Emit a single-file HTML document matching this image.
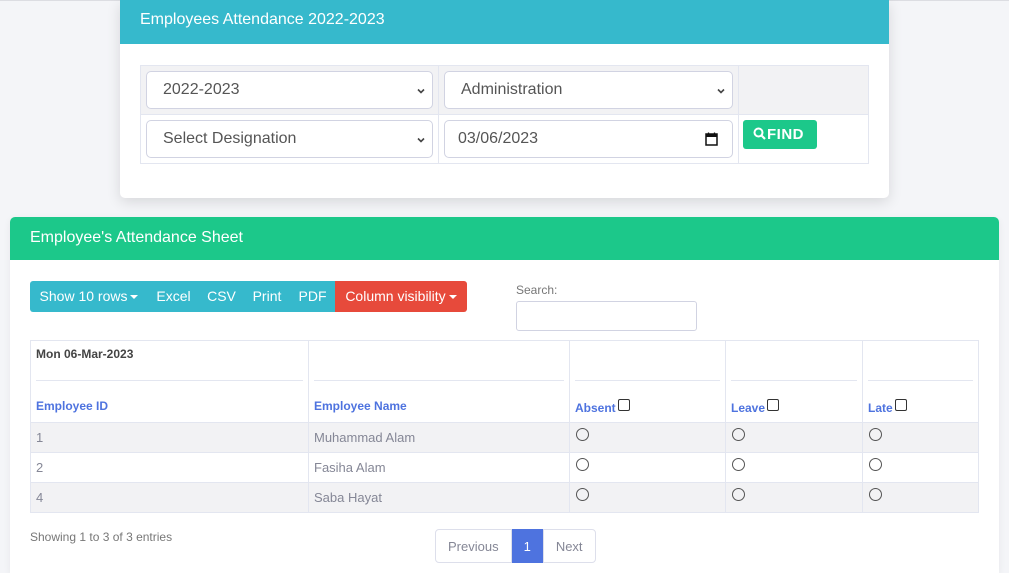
<!DOCTYPE html>
<html><head><style>
*{box-sizing:border-box;margin:0;padding:0}
html,body{width:1009px;height:573px;overflow:hidden}
body{background:#f4f5f8;font-family:"Liberation Sans",sans-serif;position:relative}
.topline{position:absolute;left:0;top:0;width:1009px;height:1px;background:#dcdde2}
.card1{position:absolute;left:120px;top:0;width:769px;height:198px;background:#fff;box-shadow:0 4px 14px rgba(0,0,0,.12);border-radius:0 0 5px 5px}
.h1{height:44px;background:#36b9cc;color:#fff;font-size:16px;padding:11px 20px}
.t1{position:absolute;left:20px;top:65px;width:729px;border-collapse:collapse}
.t1 td{border:1px solid #e3e6f0;padding:0 5px;height:49px}
.t1 tr:first-child td{background:#f2f2f4}
.sel{height:38px;border:1px solid #d1d3e2;border-radius:5px;background:#fff;color:#555;font-size:16px;padding:9px 16px;position:relative}
.sel .ch{position:absolute;right:6px;top:14px;width:10px;height:10px}
.find{display:inline-block;background:#1cc88a;color:#fff;font-weight:bold;font-size:15px;padding:6px 10px 6px 10px;width:74px;border-radius:3px;margin-left:-1px;letter-spacing:0.5px}
.card2{position:absolute;left:10px;top:217px;width:989px;height:356px;background:#fff;border-radius:5px 5px 0 0;box-shadow:0 2px 8px rgba(0,0,0,.06)}
.h2{height:43px;background:#1cc88a;color:#fff;font-size:16px;padding:12px 20px;border-radius:5px 5px 0 0}
.btns{position:absolute;left:20px;top:64px;height:31px;display:flex;font-size:14px;color:#fff}
.btns div{padding:7px 0;background:#36b9cc;text-align:center}
.btns .r{background:#e74a3b;border-radius:0 3px 3px 0}
.btns .f{border-radius:3px 0 0 3px}
.car{display:inline-block;border-left:4px solid transparent;border-right:4px solid transparent;border-top:4px solid #fff;vertical-align:middle;margin-left:3px}
.slab{position:absolute;left:506px;top:66px;font-size:12px;color:#777}
.sbox{position:absolute;left:506px;top:84px;width:181px;height:30px;border:1px solid #d1d3e2;border-radius:3px}
.t2{position:absolute;left:20px;top:123px;width:949px;border-collapse:collapse;font-size:13px}
.t2 td{border:1px solid #e3e6f0;height:30px;padding:0 5px;color:#858796}
.t2 .hd td{height:82px;vertical-align:top;padding:5px 5px 0}
.t2 .sh{height:35px;border-bottom:1px solid #e3e6f0;font-weight:bold;color:#444;font-size:12px;padding-top:1px}
.t2 .hl{color:#4e73df;font-weight:bold;font-size:12px;padding-top:18px}
.t2 .g td{background:#f2f2f4}
.cb{display:inline-block;width:12px;height:12px;border:1px solid #333;border-radius:2px;vertical-align:1px;margin-left:2px}
.rd{display:inline-block;width:13px;height:13px;border:1px solid #555;border-radius:50%;margin-left:1px;vertical-align:3px}
.info{position:absolute;left:20px;top:313px;font-size:12px;color:#777}
.pg{position:absolute;left:425px;top:312px;display:flex;height:34px;font-size:13px}
.pg div{border:1px solid #dddfeb;padding:9px 12px;color:#858796;background:#fff}
.pg .a{background:#4e73df;color:#fff;border-color:#4e73df;padding:9px 11px}
.pg .p{border-radius:4px 0 0 4px}.pg .n{border-radius:0 4px 4px 0}
</style></head><body>
<div class="topline"></div>
<div class="card1">
<div class="h1">Employees Attendance 2022-2023</div>
<table class="t1">
<tr><td style="width:298px"><div class="sel">2022-2023<svg class="ch" viewBox="0 0 10 10"><path d="M2 3.5L5 6.5L8 3.5" stroke="#444" stroke-width="1.6" fill="none"/></svg></div></td>
<td style="width:300px"><div class="sel">Administration<svg class="ch" viewBox="0 0 10 10"><path d="M2 3.5L5 6.5L8 3.5" stroke="#444" stroke-width="1.6" fill="none"/></svg></div></td><td></td></tr>
<tr><td><div class="sel">Select Designation<svg class="ch" viewBox="0 0 10 10"><path d="M2 3.5L5 6.5L8 3.5" stroke="#444" stroke-width="1.6" fill="none"/></svg></div></td>
<td><div class="sel" style="padding-left:13px">03/06/2023<svg style="position:absolute;right:14px;top:11px" width="13" height="14" viewBox="0 0 13 14"><rect x="1" y="2" width="11" height="11" fill="none" stroke="#111" stroke-width="1.5"/><rect x="1" y="2" width="11" height="3" fill="#111"/><path d="M3.5 0.5v2M9.5 0.5v2" stroke="#111" stroke-width="1.3"/></svg></div></td>
<td style="vertical-align:top;padding-top:5px"><span class="find"><svg width="13" height="13" viewBox="0 0 13 13" style="vertical-align:-1px;margin-right:1px"><circle cx="5.5" cy="5.5" r="4" stroke="#fff" stroke-width="2" fill="none"/><path d="M8.5 8.5L12 12" stroke="#fff" stroke-width="2.2"/></svg>FIND</span></td></tr>
</table>
</div>
<div class="card2">
<div class="h2">Employee's Attendance Sheet</div>
<div class="btns"><div class="f" style="width:118px">Show 10 rows<span class="car"></span></div><div style="width:51px">Excel</div><div style="width:45px">CSV</div><div style="width:46px">Print</div><div style="width:45px">PDF</div><div class="r" style="width:132px">Column visibility<span class="car"></span></div></div>
<div class="slab">Search:</div><div class="sbox"></div>
<table class="t2">
<tr class="hd"><td style="width:278px"><div class="sh">Mon 06-Mar-2023</div><div class="hl">Employee ID</div></td>
<td style="width:261px"><div class="sh"></div><div class="hl">Employee Name</div></td>
<td style="width:156px"><div class="sh"></div><div class="hl">Absent<span class="cb"></span></div></td>
<td style="width:137px"><div class="sh"></div><div class="hl">Leave<span class="cb"></span></div></td>
<td><div class="sh"></div><div class="hl">Late<span class="cb"></span></div></td></tr>
<tr class="g"><td>1</td><td>Muhammad Alam</td><td><span class="rd"></span></td><td><span class="rd"></span></td><td><span class="rd"></span></td></tr>
<tr><td>2</td><td>Fasiha Alam</td><td><span class="rd"></span></td><td><span class="rd"></span></td><td><span class="rd"></span></td></tr>
<tr class="g"><td>4</td><td>Saba Hayat</td><td><span class="rd"></span></td><td><span class="rd"></span></td><td><span class="rd"></span></td></tr>
</table>
<div class="info">Showing 1 to 3 of 3 entries</div>
<div class="pg"><div class="p">Previous</div><div class="a">1</div><div class="n">Next</div></div>
</div>
</body></html>
